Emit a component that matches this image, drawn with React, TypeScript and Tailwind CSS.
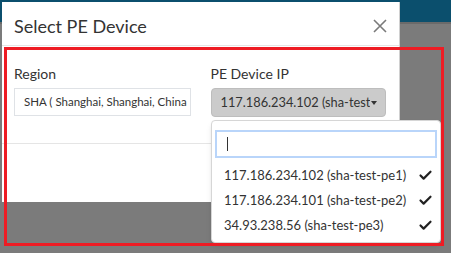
import { Check } from "lucide-react"

const devices = [
  "117.186.234.102 (sha-test-pe1)",
  "117.186.234.101 (sha-test-pe2)",
  "34.93.238.56 (sha-test-pe3)",
]

export default function App() {
  return (
    <div
      className="relative w-[451px] h-[253px] overflow-hidden bg-[#7b7b7b] text-[#333]"
      style={{ fontFamily: "Lato, 'Open Sans', sans-serif" }}
    >
      {/* page behind the backdrop */}
      <div className="h-[22px] bg-[#0b4f6d]" />
      <div className="h-[2px] bg-[#6a6a6a]" />

      {/* modal */}
      <div className="absolute left-[2px] top-[2px] w-[398px] h-[200px] bg-white flex flex-col border-r border-[#d0d0d0]">
        <div className="h-[44px] shrink-0 flex items-center justify-between pl-[12px] pr-[12px] pt-[5px] border-b border-[#e5e5e5]">
          <h4 className="text-[18px] leading-none">Select PE Device</h4>
          <svg width="14" height="14" viewBox="0 0 14 14">
            <path d="M1 1L13 13M13 1L1 13" stroke="#7a7a7a" strokeWidth="1.6" />
          </svg>
        </div>

        <div className="h-[98px] shrink-0 grid grid-cols-2 gap-x-[20px] px-[12px] pt-[20px] border-b border-[#e5e5e5]">
          <div>
            <div className="text-[14px] leading-[16px] mb-[6px]">Region</div>
            <div className="h-[28px] border border-[#dfe2e6] flex items-center pl-[9px] text-[11.5px] whitespace-nowrap overflow-hidden">
              SHA ( Shanghai, Shanghai, China
            </div>
          </div>
          <div>
            <div className="text-[14px] leading-[16px] mb-[6px]">PE Device IP</div>
            <div className="h-[29px] w-[175px] bg-[#cbcbcb] border border-[#bdbdbd] rounded-[4px] flex items-center pl-[9px] pr-[8px] text-[12.8px]">
              <span className="flex-1 whitespace-nowrap overflow-hidden">117.186.234.102 (sha-test-pe1)</span>
              <span className="ml-[1px] border-x-[3px] border-x-transparent border-t-[4px] border-t-[#333]" />
            </div>
          </div>
        </div>
        <div className="flex-1" />
      </div>

      {/* dropdown menu */}
      <div className="absolute left-[211px] top-[120px] w-[230px] h-[123px] bg-white border border-[#d6d6d6] rounded-[4px] shadow-md px-[3px] pt-[9px]">
        <div className="h-[28px] border-2 border-[#b9d5fa] flex items-center pl-[10px]">
          <span className="w-px h-[14px] bg-[#333]" />
        </div>
        <div className="mt-[5px]">
          {devices.map((d) => (
            <div key={d} className="h-[25px] flex items-center justify-between pl-[9px] pr-[4px] text-[13px]">
              <span>{d}</span>
              <Check size={15} strokeWidth={3.5} className="text-[#222]" />
            </div>
          ))}
        </div>
      </div>

      {/* annotation */}
      <div className="absolute left-[4px] top-[47px] w-[440px] h-[199px] border-[3px] border-[#ee1c24]" />
    </div>
  )
}
